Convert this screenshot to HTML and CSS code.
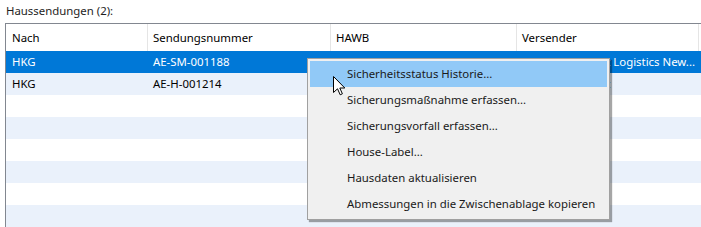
FILE: index.html
```html
<!DOCTYPE html>
<html>
<head>
<meta charset="utf-8">
<link rel="stylesheet" href="styles.css">
</head>
<body>
<div class="label">Haussendungen (2):</div>
<div class="grid">
  <div class="row header">
    <div class="cell c1">Nach</div>
    <div class="cell c2">Sendungsnummer</div>
    <div class="cell c3">HAWB</div>
    <div class="cell c4">Versender</div>
    <div class="cell c5"></div>
  </div>
  <div class="row selected">
    <div class="cell c1">HKG</div>
    <div class="cell c2">AE-SM-001188</div>
    <div class="cell c3">HKG-00000000</div>
    <div class="cell c4 end"><span>Global Transport Logistics New...</span></div>
  </div>
  <div class="row alt">
    <div class="cell c1">HKG</div>
    <div class="cell c2">AE-H-001214</div>
    <div class="cell c3">HKG-00000001</div>
    <div class="cell c4">Global Trans Cac</div>
  </div>
  <div class="row"></div>
  <div class="row alt"></div>
  <div class="row"></div>
  <div class="row alt"></div>
  <div class="row"></div>
  <div class="row alt"></div>
</div>

<div class="menu">
  <div class="item active">Sicherheitsstatus Historie...</div>
  <div class="item">Sicherungsmaßnahme erfassen...</div>
  <div class="item">Sicherungsvorfall erfassen...</div>
  <div class="item">House-Label...</div>
  <div class="item">Hausdaten aktualisieren</div>
  <div class="item">Abmessungen in die Zwischenablage kopieren</div>
</div>

<svg class="cursor" width="13" height="20" viewBox="0 0 13 20">
  <path d="M0.5 0.5 L0.5 16.5 L4.5 12.8 L7.2 18.8 L9.4 17.8 L6.8 12 L11.8 12 Z" fill="#fff" stroke="#000" stroke-width="1" stroke-linejoin="miter"/>
</svg>
</body>
</html>
```

FILE: styles.css
```css
html, body {
  margin: 0;
  padding: 0;
  background: #ffffff;
  width: 701px;
  height: 227px;
  overflow: hidden;
  position: relative;
  font-family: "Noto Sans", "Segoe UI", sans-serif;
  font-size: 11.4px;
  color: #000;
}

.label {
  height: 23px;
  line-height: 22px;
  padding-left: 6px;
  color: #1e1e1e;
}

.grid {
  margin-left: 5px;
  border-top: 1px solid #828790;
  border-left: 1px solid #828790;
  height: 210px;
  overflow: hidden;
}

.row {
  display: flex;
  height: 22px;
  background: #ffffff;
}

.row.alt {
  background: #eaf1fb;
}

.row.header {
  height: 27px;
  background: #ffffff;
}

.row.selected {
  background: #0078d7;
  color: #ffffff;
}

.cell {
  box-sizing: border-box;
  padding-left: 6px;
  white-space: nowrap;
  overflow: hidden;
  line-height: 22px;
  flex: none;
}

.header .cell {
  line-height: 27px;
  border-right: 1px solid #e5e5e5;
}

.c1 { width: 142px; }
.c2 { width: 183px; padding-left: 5px; }
.c3 { width: 186px; padding-left: 5px; }
.c4 { width: 182px; padding-left: 5px; }
.c5 { flex: 1; }
.header .c5 { border-right: none; }

.cell.end {
  display: flex;
  justify-content: flex-end;
  padding-right: 4px;
}

.cell.end span {
  flex: none;
}

.menu {
  position: absolute;
  left: 307px;
  top: 58px;
  width: 297px;
  padding: 2px;
  background: #f0f0f0;
  border: 1px solid #a0a0a0;
  box-shadow: 2px 2px 1px rgba(0, 0, 0, 0.35);
  color: #1a1a1a;
}

.item {
  height: 26px;
  line-height: 26px;
  padding-left: 37px;
  white-space: nowrap;
}

.item.active {
  background: #91c9f7;
}

.cursor {
  position: absolute;
  left: 333px;
  top: 76px;
}
```
